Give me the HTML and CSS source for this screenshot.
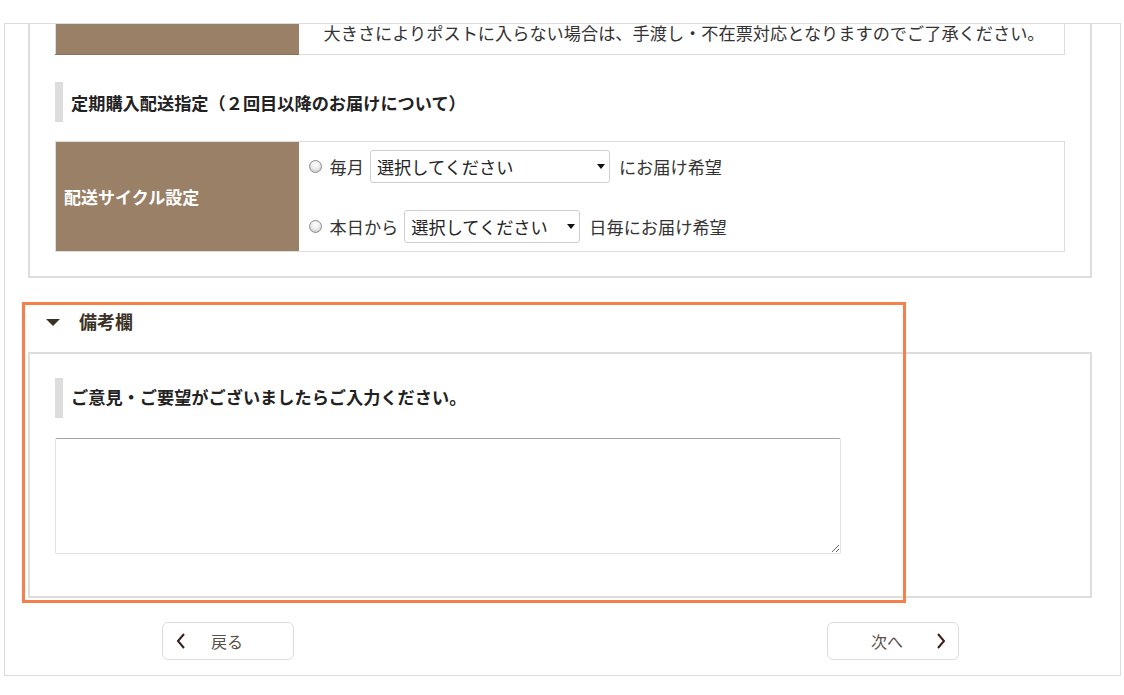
FILE: index.html
```html
<!DOCTYPE html>
<html lang="ja">
<head>
<meta charset="utf-8">
<title>備考欄</title>
<link rel="stylesheet" href="styles.css">
</head>
<body>
<div class="frame">
  <div class="panel panel-top">
    <table class="form-table first">
      <tr>
        <th class="label"></th>
        <td class="note">大きさによりポストに入らない場合は、手渡し・不在票対応となりますのでご了承ください。</td>
      </tr>
    </table>

    <h3 class="sub-heading sub-heading-1">定期購入配送指定（２回目以降のお届けについて）</h3>

    <table class="form-table cycle">
      <tr>
        <th class="label label-text">配送サイクル設定</th>
        <td class="options">
          <div class="option-row">
            <input type="radio" name="cycle" class="radio">
            <span class="opt-text">毎月</span>
            <span class="select-wrap wide"><select class="sel"><option>選択してください</option></select></span>
            <span class="opt-text after">にお届け希望</span>
          </div>
          <div class="option-row">
            <input type="radio" name="cycle" class="radio">
            <span class="opt-text">本日から</span>
            <span class="select-wrap narrow"><select class="sel"><option>選択してください</option></select></span>
            <span class="opt-text after">日毎にお届け希望</span>
          </div>
        </td>
      </tr>
    </table>
  </div>

  <div class="remarks-head">
    <span class="tri"></span>
    <span class="remarks-title">備考欄</span>
  </div>

  <div class="panel panel-remarks">
    <h3 class="sub-heading sub-heading-2">ご意見・ご要望がございましたらご入力ください。</h3>
    <textarea class="remarks-text"></textarea>
  </div>

  <div class="nav">
    <button class="nav-btn back">
      <svg class="chev" width="12" height="18" viewBox="0 0 12 18"><polyline points="9,2 3,9 9,16" fill="none" stroke="#3a1c1c" stroke-width="2"/></svg>
      <span class="nav-label">戻る</span>
    </button>
    <button class="nav-btn next">
      <span class="nav-label">次へ</span>
      <svg class="chev" width="12" height="18" viewBox="0 0 12 18"><polyline points="3,2 9,9 3,16" fill="none" stroke="#3a1c1c" stroke-width="2"/></svg>
    </button>
  </div>

  <div class="highlight"></div>
</div>
</body>
</html>
```

FILE: styles.css
```css
* { box-sizing: border-box; }

html, body {
  margin: 0;
  padding: 0;
  background: #fff;
}

body {
  font-family: "Noto Sans CJK JP", "Noto Sans", sans-serif;
  color: #333;
  font-size: 17px;
}

.frame {
  position: relative;
  margin: 23px 0 0 4px;
  width: 1117px;
  height: 653px;
  border: 1px solid #dcdcdc;
}

.panel {
  margin: 0 28px 0 23px;
  border: 2px solid #dddddd;
  padding: 0 25px;
}

.panel-top {
  border-top: none;
  padding-bottom: 24px;
}

.form-table {
  width: 100%;
  border-collapse: collapse;
  border: 1px solid #dddddd;
}

.form-table.first {
  border-top: none;
}

.form-table th,
.form-table td {
  padding: 0;
}

.label {
  width: 243px;
  background: #998066;
  border-bottom: 1px solid #8c7259;
}

.first .label { height: 30px; }

.note {
  vertical-align: bottom;
  padding: 0 0 12px 25px !important;
  line-height: 18px;
  height: 30px;
  font-size: 17.2px;
  color: #333;
  white-space: nowrap;
}

.sub-heading {
  margin: 0;
  height: 40px;
  border-left: 8px solid #dddddd;
  padding-left: 8px;
  display: flex;
  align-items: center;
  font-size: 17.2px;
  font-weight: 700;
  color: #222;
}

.sub-heading-1 {
  margin-top: 27px;
}

.sub-heading-2 {
  padding-bottom: 4px;
}

.cycle {
  margin-top: 19px;
  height: 110px;
}

.label-text {
  color: #fff;
  font-weight: 700;
  font-size: 17px;
  text-align: left;
  padding-left: 8px !important;
  vertical-align: middle;
  border-bottom: none;
}

.options {
  padding: 8px 0 8px 10px !important;
  vertical-align: top;
}

.option-row {
  display: flex;
  align-items: center;
  height: 33px;
}

.option-row + .option-row {
  margin-top: 27px;
}

.radio {
  appearance: none;
  -webkit-appearance: none;
  width: 13px;
  height: 13px;
  margin: 0 8px 0 0;
  border: 1px solid #8f8f8f;
  border-radius: 50%;
  background: radial-gradient(circle at 50% 35%, #ffffff 0%, #ececec 45%, #b9b9b9 100%);
}

.opt-text {
  font-size: 17.2px;
  color: #333;
  white-space: nowrap;
}

.opt-text.after {
  margin-left: 9px;
}

.select-wrap {
  position: relative;
  display: inline-block;
  margin-left: 6px;
  height: 33px;
}

.select-wrap.wide { width: 240px; }
.select-wrap.narrow { width: 176px; }

.select-wrap::after {
  content: "";
  position: absolute;
  right: 5px;
  top: 14px;
  border-left: 4px solid transparent;
  border-right: 4px solid transparent;
  border-top: 5px solid #111;
  pointer-events: none;
}

.sel {
  appearance: none;
  -webkit-appearance: none;
  width: 100%;
  height: 100%;
  border: 1px solid #cfcfcf;
  border-radius: 3px;
  background: #fff;
  font-family: "Noto Sans CJK JP", "Noto Sans", sans-serif;
  font-size: 17.2px;
  color: #222;
  padding: 0 0 0 6px;
}

.remarks-head {
  height: 40px;
  margin: 23px 0 11px 23px;
  display: flex;
  align-items: center;
  padding-left: 18px;
}

.tri {
  width: 0;
  height: 0;
  border-left: 7px solid transparent;
  border-right: 7px solid transparent;
  border-top: 7px solid #3b3226;
  margin-top: 3px;
}

.remarks-title {
  margin-left: 19px;
  font-size: 18px;
  font-weight: 700;
  color: #3b3226;
}

.panel-remarks {
  padding-top: 24px;
  padding-bottom: 42px;
}

.remarks-text {
  display: block;
  margin-top: 20px;
  width: 786px;
  height: 116px;
  border: 1px solid #dde0e6;
  border-top-color: #a3a3ad;
  border-radius: 2px;
  resize: vertical;
  font-family: "Noto Sans CJK JP", sans-serif;
}

.nav {
  display: flex;
  justify-content: space-between;
  padding: 0 161px 0 157px;
  margin-top: 24px;
}

.nav-btn {
  width: 132px;
  height: 38px;
  border: 1px solid #dddddd;
  border-radius: 6px;
  background: #fff;
  display: flex;
  align-items: center;
  font-family: "Noto Sans CJK JP", sans-serif;
  font-size: 16px;
  color: #5a5048;
  padding: 0;
}

.back { padding-left: 12px; }
.back .nav-label { margin-left: 24px; }

.next { padding-left: 43px; }
.next .nav-label { margin-right: 32px; }

.chev { display: block; }

.highlight {
  position: absolute;
  left: 17px;
  top: 278px;
  width: 884px;
  height: 301px;
  border: 3px solid #f5804b;
  pointer-events: none;
}
```
